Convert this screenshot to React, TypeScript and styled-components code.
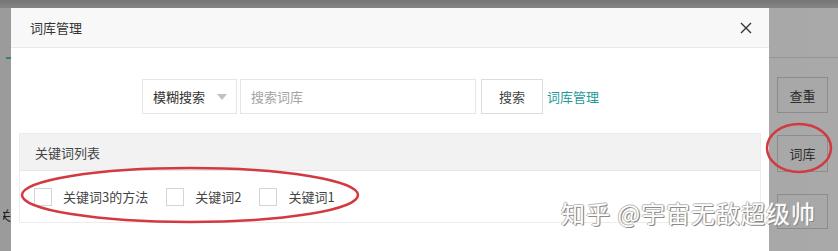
import * as React from "react";
import styled, { createGlobalStyle } from "styled-components";

const GlobalStyle = createGlobalStyle`
  html, body {
    margin: 0;
    padding: 0;
    background: #a2a2a2;
  }
  body {
    font-family: "Noto Sans CJK SC", "Noto Sans", sans-serif;
    font-size: 13px;
    color: #333;
  }
`;

const Page = styled.div`
  position: relative;
  width: 838px;
  height: 251px;
  overflow: hidden;
  background: linear-gradient(to right, #9b9b9b 0, #a3a3a3 60%, #a9a9a9 100%);
`;

const BackPage = styled.div`
  display: flex;
  flex-direction: column;
  height: 100%;
`;

const TopBand = styled.div`
  height: 8px;
  flex: 0 0 8px;
  background: linear-gradient(to bottom, #767676, #858585);
`;

const BackBody = styled.div`
  flex: 1;
  display: flex;
  justify-content: space-between;
  border-top: 1px solid transparent;
`;

const LeftEdge = styled.div`
  width: 11px;
  display: flex;
  flex-direction: column;
  align-items: flex-end;
`;

const TabMark = styled.div`
  margin-top: 48px;
  width: 5px;
  height: 2px;
  background: #2f7f7a;
`;

const EdgeChar = styled.div`
  margin-top: 146px;
  width: 8px;
  overflow: hidden;
  font-size: 13px;
  color: #222;
  direction: rtl;
  white-space: nowrap;
`;

const RightColumn = styled.div`
  width: 69px;
  border-top: 1px solid #959595;
  margin-top: 48px;
  display: flex;
  flex-direction: column;
  gap: 22px;
  padding: 19px 0 0 8px;
  box-sizing: border-box;
`;

const BackButton = styled.div<{ $h: number }>`
  width: 51px;
  height: ${(p) => p.$h}px;
  box-sizing: border-box;
  border: 1px solid #8c8c8c;
  background: #a8a8a8;
  display: flex;
  align-items: center;
  justify-content: center;
  font-size: 13px;
  color: #2e2e2e;
`;

const Modal = styled.div`
  position: absolute;
  left: 11px;
  top: 8px;
  width: 758px;
  bottom: -20px;
  background: #fff;
  display: flex;
  flex-direction: column;
`;

const ModalHeader = styled.div`
  height: 40px;
  flex: 0 0 40px;
  box-sizing: border-box;
  background: #f8f8f8;
  border-bottom: 1px solid #e9e9e9;
  display: flex;
  align-items: center;
  justify-content: space-between;
  padding: 0 16px 0 19px;
  font-size: 13px;
  color: #333;
`;

const CloseButton = styled.span`
  display: flex;
  width: 14px;
  height: 14px;
  align-items: center;
  justify-content: center;
`;

const SearchRow = styled.div`
  display: flex;
  align-items: center;
  margin: 31px 0 0 131px;
  height: 35px;
`;

const SelectBox = styled.div`
  width: 95px;
  height: 35px;
  box-sizing: border-box;
  border: 1px solid #e6e6e6;
  display: flex;
  align-items: center;
  padding-left: 10px;
  gap: 12px;
  color: #333;
`;

const Caret = styled.span`
  width: 0;
  height: 0;
  border-left: 5px solid transparent;
  border-right: 5px solid transparent;
  border-top: 6px solid #c2c2c2;
`;

const SearchInput = styled.div`
  margin-left: 3px;
  width: 236px;
  height: 35px;
  box-sizing: border-box;
  border: 1px solid #e6e6e6;
  display: flex;
  align-items: center;
  padding-left: 10px;
  color: #a3a3a3;
`;

const SearchButton = styled.div`
  margin-left: 5px;
  width: 62px;
  height: 35px;
  box-sizing: border-box;
  border: 1px solid #dcdcdc;
  display: flex;
  align-items: center;
  justify-content: center;
  color: #444;
`;

const ManageLink = styled.span`
  margin-left: 4px;
  color: #1e9a96;
`;

const Panel = styled.div`
  margin: 19px 8px 0 8px;
  border: 1px solid #ececec;
`;

const PanelHeader = styled.div`
  height: 37px;
  box-sizing: border-box;
  background: #f2f2f2;
  border-bottom: 1px solid #e6e6e6;
  display: flex;
  align-items: center;
  padding-left: 15px;
  color: #444;
`;

const PanelBody = styled.div`
  height: 51px;
  display: flex;
  align-items: center;
  padding-left: 14px;
`;

const CheckItem = styled.label`
  display: flex;
  align-items: center;
  margin-right: 18px;
  color: #444;
`;

const CheckSquare = styled.span`
  width: 18px;
  height: 18px;
  box-sizing: border-box;
  border: 1px solid #d4d4d4;
  background: #fff;
  margin-right: 11px;
`;

const Annotations = styled.svg`
  position: absolute;
  left: 0;
  top: 0;
  pointer-events: none;
`;

const Watermark = styled.div`
  position: absolute;
  left: 561px;
  top: 199px;
  font-size: 24px;
  line-height: 28px;
  letter-spacing: 1px;
  color: #fff;
  white-space: nowrap;
  text-shadow: 1px 1px 0 #8a8a8a, -1px 0 0 #bbb, 0 -1px 0 #bbb, 1px 0 1px #999;
`;

const keywords = ["关键词3的方法", "关键词2", "关键词1"];

export default function App() {
  return (
    <Page>
      <GlobalStyle />
      <BackPage>
        <TopBand />
        <BackBody>
          <LeftEdge>
            <TabMark />
            <EdgeChar>关</EdgeChar>
          </LeftEdge>
          <RightColumn>
            <BackButton $h={36}>查重</BackButton>
            <BackButton $h={37}>词库</BackButton>
            <BackButton $h={35} />
          </RightColumn>
        </BackBody>
      </BackPage>

      <Modal>
        <ModalHeader>
          <span>词库管理</span>
          <CloseButton>
            <svg width="12" height="12" viewBox="0 0 12 12">
              <path d="M1 1 L11 11 M11 1 L1 11" stroke="#333" strokeWidth="1.4" fill="none" />
            </svg>
          </CloseButton>
        </ModalHeader>
        <SearchRow>
          <SelectBox>
            <span>模糊搜索</span>
            <Caret />
          </SelectBox>
          <SearchInput>搜索词库</SearchInput>
          <SearchButton>搜索</SearchButton>
          <ManageLink>词库管理</ManageLink>
        </SearchRow>
        <Panel>
          <PanelHeader>关键词列表</PanelHeader>
          <PanelBody>
            {keywords.map((k) => (
              <CheckItem key={k}>
                <CheckSquare />
                {k}
              </CheckItem>
            ))}
          </PanelBody>
        </Panel>
      </Modal>

      <Annotations width="838" height="251" viewBox="0 0 838 251">
        <ellipse cx="190" cy="195" rx="168" ry="27" fill="none" stroke="#d23a40" strokeWidth="2.5" />
        <ellipse cx="799" cy="148" rx="32" ry="24" fill="none" stroke="#d23a40" strokeWidth="2.5" />
      </Annotations>

      <Watermark>知乎 @宇宙无敌超级帅</Watermark>
    </Page>
  );
}
